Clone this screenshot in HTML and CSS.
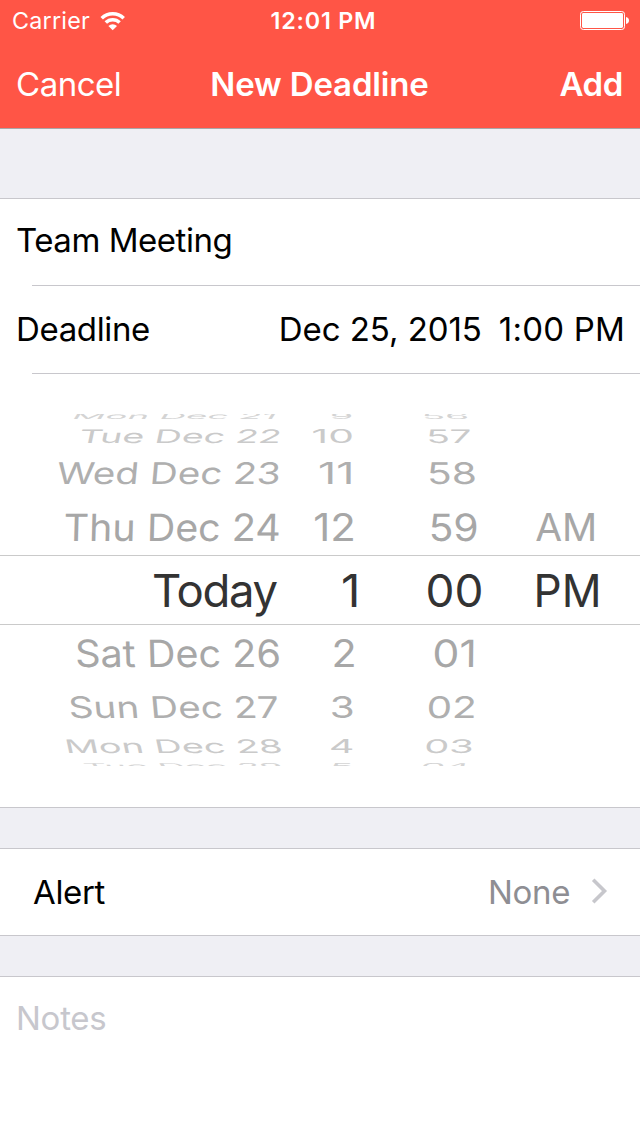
FILE: index.html
```html
<!DOCTYPE html>
<html lang="en">
<head>
<meta charset="utf-8">
<title>New Deadline</title>
<link rel="stylesheet" href="styles.css">
</head>
<body>
<div class="screen">
  <header class="header">
    <div class="status">
      <div class="status-left">
        <span class="carrier">Carrier</span>
        <svg class="wifi" width="26" height="20" viewBox="0 0 26 20" aria-hidden="true">
          <path class="wifi-arc" d="M1.700 7.300a15.600 15.600 0 0 1 22 0M5.800 11.600a9.800 9.800 0 0 1 13.800 0"/>
          <path class="wifi-dot" d="M12.700 19.200l-4.300-4.300a6.100 6.100 0 0 1 8.600 0z"/>
        </svg>
      </div>
      <span class="clock">12:01 PM</span>
      <div class="status-right">
        <svg class="battery" width="50" height="20" viewBox="0 0 50 20" aria-hidden="true">
          <rect class="battery-shell" x="0.5" y="0.5" width="44" height="18" rx="2.8"/>
          <rect class="battery-fill" x="2" y="2" width="41" height="15" rx="1.4"/>
          <path class="battery-fill" d="M46 6c2 0.300 3 1.600 3 3.500s-1 3.200-3 3.500z"/>
        </svg>
      </div>
    </div>
    <nav class="nav">
      <a class="nav-cancel">Cancel</a>
      <h1 class="nav-title">New Deadline</h1>
      <a class="nav-add">Add</a>
    </nav>
  </header>

  <main class="form">
    <section class="group group-main">
      <div class="row row-title"><span class="label label-title">Team Meeting</span></div>
      <hr class="separator">
      <div class="row row-deadline">
        <span class="label">Deadline</span>
        <span class="when"><span class="when-date">Dec 25, 2015</span><span class="when-time">1:00 PM</span></span>
      </div>
      <hr class="separator">
      <div class="picker">
        <div class="wheel">
          <div class="tick up4"><span class="day">Mon Dec 21</span><span class="hour">9</span><span class="minute">56</span></div>
          <div class="tick up3"><span class="day">Tue Dec 22</span><span class="hour">10</span><span class="minute">57</span></div>
          <div class="tick up2"><span class="day">Wed Dec 23</span><span class="hour">11</span><span class="minute">58</span></div>
          <div class="tick up1"><span class="day">Thu Dec 24</span><span class="hour">12</span><span class="minute">59</span><span class="half">AM</span></div>
          <div class="tick current"><span class="day">Today</span><span class="hour">1</span><span class="minute">00</span><span class="half">PM</span></div>
          <div class="tick down1"><span class="day">Sat Dec 26</span><span class="hour">2</span><span class="minute">01</span></div>
          <div class="tick down2"><span class="day">Sun Dec 27</span><span class="hour">3</span><span class="minute">02</span></div>
          <div class="tick down3"><span class="day">Mon Dec 28</span><span class="hour">4</span><span class="minute">03</span></div>
          <div class="tick down4"><span class="day">Tue Dec 29</span><span class="hour">5</span><span class="minute">04</span></div>
        </div>
      </div>
    </section>

    <section class="group group-alert">
      <div class="row row-alert">
        <span class="label">Alert</span>
        <span class="alert-value">None
          <svg class="chevron" width="17" height="28" viewBox="0 0 17 28" aria-hidden="true"><path d="M2.200 2.700L13.500 14 2.200 25.300"/></svg>
        </span>
      </div>
    </section>

    <section class="group group-notes">
      <div class="row row-notes"><span class="placeholder">Notes</span></div>
    </section>
  </main>
</div>
</body>
</html>
```
FILE: styles.css
```css
* { box-sizing: border-box; }

body {
  margin: 0;
  font-family: Inter, "Liberation Sans", sans-serif;
  color: #000;
}

.screen {
  width: 640px;
  height: 1136px;
  display: flex;
  flex-direction: column;
  overflow: hidden;
  background: #efeff4;
}

/* Header */
.header {
  flex: none;
  height: 129px;
  background: #ff5546;
  border-bottom: 1px solid #a9a6a8;
  color: #fff;
}

.status {
  height: 41px;
  display: grid;
  grid-template-columns: 1fr auto 1fr;
  align-items: center;
  padding: 0 10px 0 12px;
  font-size: 23.3px;
  line-height: 41px;
}

.status-left { display: flex; align-items: center; gap: 9.5px; }
.carrier { letter-spacing: 0.25px; }
.clock { font-weight: 600; letter-spacing: 0.8px; padding-left: 5px; }
.status-right { display: flex; justify-content: flex-end; }
.wifi, .battery, .chevron { display: block; flex: none; }
.wifi-arc { fill: none; stroke: #fff; stroke-width: 3.5; }
.wifi-dot { fill: #fff; }
.battery-shell { fill: none; stroke: #fff; stroke-width: 1; }
.battery-fill { fill: #fff; }

.nav {
  height: 87px;
  display: grid;
  grid-template-columns: 1fr auto 1fr;
  align-items: center;
  padding: 0 17px 0 16px;
  font-size: 33px;
  line-height: 87px;
}

.nav-cancel { letter-spacing: -0.48px; }
.nav-title { margin: 0; font-size: 33px; font-weight: 600; letter-spacing: -0.16px; }
.nav-add { justify-self: end; font-weight: 600; letter-spacing: -0.4px; }

/* Table groups */
.group {
  background: #fff;
  border-top: 1px solid #c8c7cc;
  border-bottom: 1px solid #c8c7cc;
}

.group-main { margin-top: 69px; }
.group-alert, .group-notes { margin-top: 40px; }
.group-notes { height: 160px; border-bottom: 0; }

.row {
  height: 87px;
  display: flex;
  align-items: center;
  justify-content: space-between;
  padding: 0 16px;
  font-size: 33px;
  line-height: 40px;
}

.row-title { height: 86px; padding-bottom: 4px; }
.row-deadline { padding-bottom: 2px; }
.row-alert { height: 86px; padding: 0 32px 0 33px; }
.row-notes { height: 83px; padding-bottom: 2px; }

.label { letter-spacing: -0.36px; }
.label-title { letter-spacing: -0.46px; }
.when { display: flex; gap: 17px; margin-right: -1px; }
.when-date { letter-spacing: -0.05px; }
.when-time { letter-spacing: 0.2px; }

.separator { height: 1px; margin: 0 0 0 32px; border: 0; background: #c8c7cc; }

.alert-value { display: flex; align-items: center; gap: 21px; color: #8e8e93; letter-spacing: -0.37px; }
.chevron { margin-top: -2px; }
.chevron path { fill: none; stroke: #c7c7cc; stroke-width: 3.6; }
.placeholder { color: #c7c7cd; letter-spacing: -0.25px; }

/* Date picker wheel */
.picker { height: 433px; padding-top: 33px; }

.wheel { clip-path: inset(7px 0 7px 0); }

.tick {
  display: grid;
  grid-template-columns: 281px 75px 70px 109px auto;
  grid-template-rows: 100%;
  align-items: center;
  padding-top: 1px;
  font-size: 40px;
  line-height: 4px;
  white-space: nowrap;
  color: var(--ink);
}

.day, .hour { justify-self: end; transform-origin: 100% 50%; }
.minute, .half { justify-self: start; transform-origin: 0 50%; }
.minute { grid-column: 4; }
.half { grid-column: 5; }

.day { transform: translateX(var(--day-x)) scale(var(--day-w), var(--h)) skewX(var(--lean)); }
.hour { transform: translateX(var(--hour-x)) scale(var(--hour-w), var(--h)); }
.minute { transform: translateX(var(--minute-x)) scale(var(--minute-w), var(--h)) skewX(calc(var(--lean) * -0.4)); }
.half { transform: translateX(var(--half-x)) scale(var(--half-w), var(--h)); }

.up4 { height: 16px; --ink: #d4d4d4; --h: 0.2; --lean: -8deg; --day-x: -4.3px; --day-w: 0.92; --hour-x: -2.4px; --hour-w: 0.95; --minute-x: -4.4px; --minute-w: 0.965; }
.up3 { height: 24px; --ink: #cacaca; --h: 0.465; --lean: -6deg; --day-x: 0.4px; --day-w: 0.937; --hour-x: -1.6px; --hour-w: 1.02; --minute-x: 0.3px; --minute-w: 0.97; }
.up2 { height: 52px; --ink: #afafaf; --h: 0.745; --lean: -4deg; --day-x: 0px; --day-w: 0.966; --hour-x: -1.1px; --hour-w: 1.12; --minute-x: 0.8px; --minute-w: 1.02; }
.up1 { height: 56px; --ink: #a7a7a7; --h: 0.94; --lean: -1.5deg; --day-x: -0.5px; --day-w: 0.986; --hour-x: 0.3px; --hour-w: 1.05; --minute-x: 2.6px; --minute-w: 1.02; --half-x: 0.2px; --half-w: 0.975; }

.current {
  height: 70px;
  border-top: 1px solid #cacaca;
  border-bottom: 1px solid #cacaca;
  font-size: 45.5px;
  --ink: #333; --h: 1; --lean: 0deg; --day-x: -4.2px; --day-w: 1; --hour-x: 5px; --hour-w: 1.05; --minute-x: -0.6px; --minute-w: 1.01; --half-x: -1.4px; --half-w: 0.97;
}
.current .day { letter-spacing: -1.3px; }

.down1 { height: 56px; --ink: #a7a7a7; --h: 0.94; --lean: 1.5deg; --day-x: 0px; --day-w: 0.99; --hour-x: 0.2px; --hour-w: 1.03; --minute-x: 6.3px; --minute-w: 1.07; }
.down2 { height: 52px; --ink: #afafaf; --h: 0.745; --lean: 4deg; --day-x: -1.4px; --day-w: 0.968; --hour-x: -1px; --hour-w: 1.01; --minute-x: 0.7px; --minute-w: 1.01; }
.down3 { height: 24px; --ink: #cacaca; --h: 0.465; --lean: 6deg; --day-x: 0.9px; --day-w: 0.945; --hour-x: -1.5px; --hour-w: 0.98; --minute-x: -1.600px; --minute-w: 0.99; }
.down4 { height: 16px; --ink: #d4d4d4; --h: 0.2; --lean: 8deg; --day-x: 2px; --day-w: 0.918; --hour-x: -2.8px; --hour-w: 0.96; --minute-x: -5px; --minute-w: 0.96; }
```
